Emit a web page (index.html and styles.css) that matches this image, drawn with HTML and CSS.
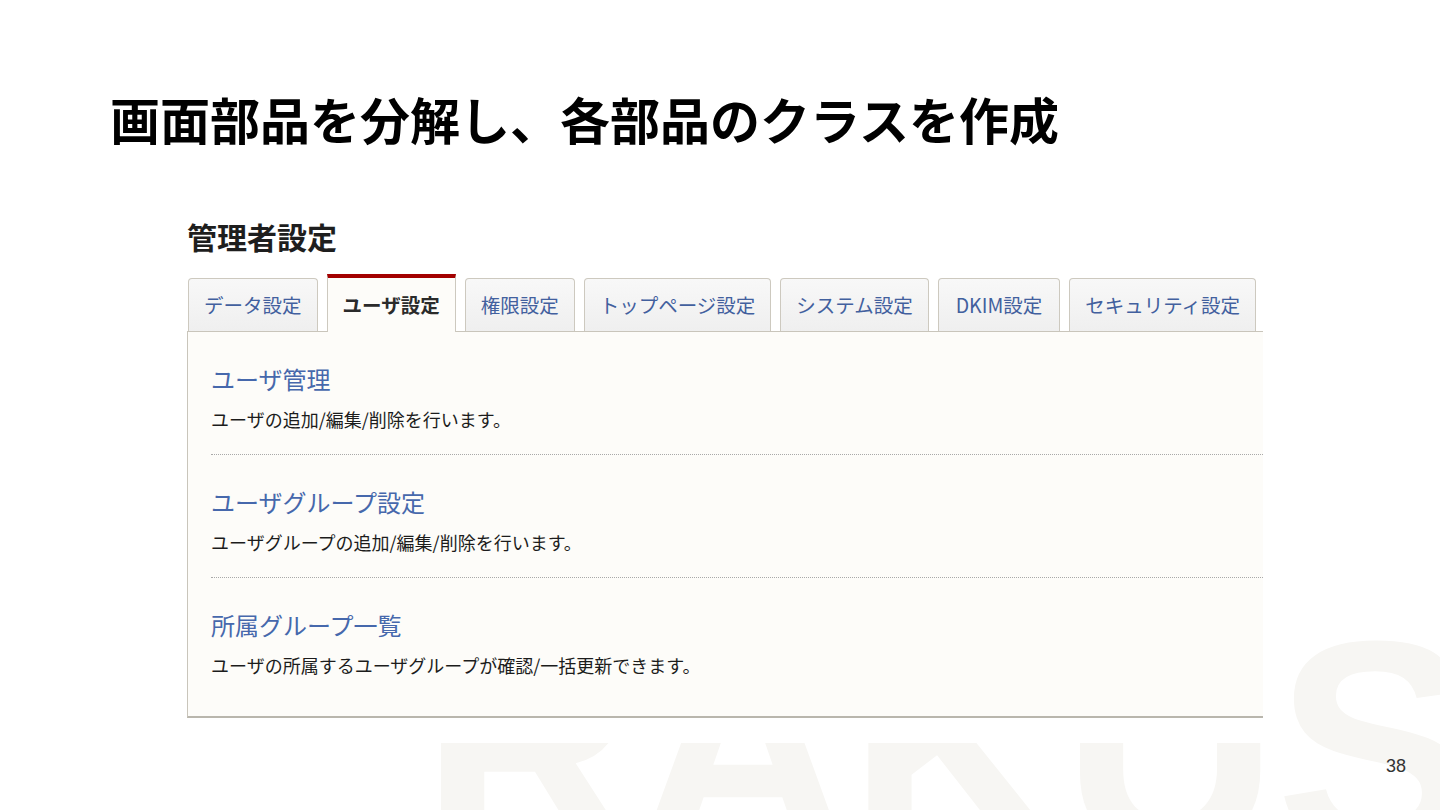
FILE: index.html
```html
<!DOCTYPE html>
<html lang="ja">

<head>
    <meta charset="UTF-8">
    <meta name="viewport" content="width=device-width, initial-scale=1.0">
    <title>画面部品を分解し、各部品のクラスを作成</title>
    <link rel="stylesheet" href="styles.css">
</head>

<body>

    <div class="slide">
        <div class="watermark">RAKUS</div>

        <h1 class="slideTitle">画面部品を分解し、各部品のクラスを作成</h1>

        <div class="shot">
            <h2 class="shotTitle">管理者設定</h2>

            <ul class="tabs">
                <li class="tab">データ設定</li>
                <li class="tab active">ユーザ設定</li>
                <li class="tab">権限設定</li>
                <li class="tab">トップページ設定</li>
                <li class="tab">システム設定</li>
                <li class="tab latin">DKIM設定</li>
                <li class="tab">セキュリティ設定</li>
            </ul>

            <div class="panel">
                <div class="item">
                    <a class="itemTitle" href="#">ユーザ管理</a>
                    <p class="itemText">ユーザの追加/編集/削除を行います。</p>
                </div>
                <div class="item">
                    <a class="itemTitle" href="#">ユーザグループ設定</a>
                    <p class="itemText">ユーザグループの追加/編集/削除を行います。</p>
                </div>
                <div class="item">
                    <a class="itemTitle" href="#">所属グループ一覧</a>
                    <p class="itemText">ユーザの所属するユーザグループが確認/一括更新できます。</p>
                </div>
            </div>
        </div>

        <div class="pageNumber">38</div>
    </div>

</body>

</html>
```

FILE: styles.css
```css
body {
    margin: 0;
    background-color: #ffffff;
}

.slide {
    position: relative;
    width: 1440px;
    height: 810px;
    overflow: hidden;
    background-color: #ffffff;
    font-family: "Noto Sans CJK JP", sans-serif;
}

/* big faded logo behind the content */
.watermark {
    position: absolute;
    left: 421px;
    top: 596px;
    font-family: "Liberation Sans", Arial, sans-serif;
    font-weight: 700;
    font-size: 300px;
    line-height: 1;
    letter-spacing: -3px;
    color: #f7f6f3;
    white-space: nowrap;
}

.slideTitle {
    position: relative;
    margin: 0;
    padding: 88px 0 0 110px;
    font-size: 50px;
    line-height: 60px;
    font-weight: 700;
    color: #000000;
}

.shot {
    position: relative;
    box-sizing: border-box;
    width: 1083px;
    margin: 68px 0 0 180px;
    padding: 0 0 25px 7px;
    background-color: #ffffff;
}

.shotTitle {
    margin: 0;
    font-size: 30px;
    line-height: 40px;
    font-weight: 700;
    color: #1e1e1e;
}

.tabs {
    display: flex;
    align-items: flex-end;
    gap: 9px;
    margin: 18px 0 0;
    padding: 0 0 0 1px;
    list-style: none;
    border-bottom: 1px solid #c9c5bb;
}

.tab {
    box-sizing: border-box;
    height: 53px;
    padding: 0 15px;
    border: 1px solid #cdc9bf;
    border-bottom: none;
    border-radius: 4px 4px 0 0;
    background: linear-gradient(#f8f8f8, #efefef);
    color: #42609e;
    font-size: 19.5px;
    line-height: 52px;
    white-space: nowrap;
}

.tab.latin {
    padding: 0 17px;
}

.tab.active {
    height: 58px;
    margin-bottom: -1px;
    border-top: 4px solid #a30000;
    border-radius: 0;
    background: #fdfcf9;
    color: #2b2b2b;
    font-weight: 700;
    line-height: 53px;
}

.panel {
    padding: 0 0 16px 23px;
    border-left: 1px solid #c9c5bb;
    border-bottom: 2px solid #b9b6ad;
    background-color: #fdfcf9;
}

.item {
    padding: 30px 0 18px;
    border-bottom: 1px dotted #a9a9a9;
}

.item:last-child {
    border-bottom: none;
}

.itemTitle {
    display: block;
    margin-bottom: 6px;
    font-size: 24px;
    line-height: 34px;
    color: #4668ac;
    text-decoration: none;
}

.itemText {
    margin: 0;
    font-size: 18px;
    line-height: 34px;
    color: #1c1c1c;
}

.pageNumber {
    position: absolute;
    right: 34px;
    top: 754px;
    font-family: "Liberation Sans", Arial, sans-serif;
    font-size: 18px;
    line-height: 24px;
    color: #333333;
}
```
